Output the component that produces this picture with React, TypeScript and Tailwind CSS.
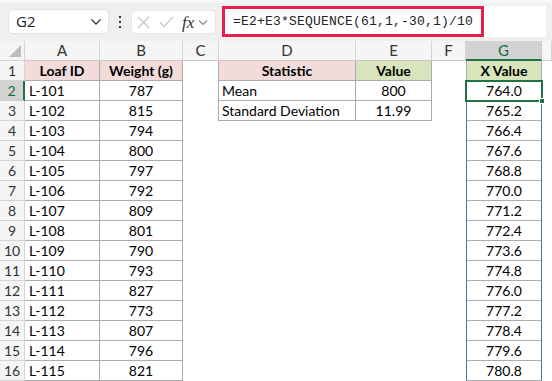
import React from 'react';

const COLS = ['A', 'B', 'C', 'D', 'E', 'F', 'G', 'H'];
const WEIGHTS = [787, 815, 794, 800, 797, 792, 809, 801, 790, 793, 827, 773, 807, 796, 821];

const font = { fontFamily: 'Lato, "Liberation Sans", sans-serif' };

function Corner() {
  return (
    <div className="relative border-r border-b border-[#d4d4d4] bg-[#f5f5f5]">
      <svg className="absolute right-[3px] bottom-[3px]" width="12" height="12" viewBox="0 0 12 12">
        <polygon points="12,0 12,12 0,12" fill="#bdbdbd" />
      </svg>
    </div>
  );
}

function Toolbar() {
  return (
    <div className="h-[41px] bg-[#efefef] border-t-[3px] border-[#f7f7f7] flex items-center gap-[6px] pl-[8px] pr-[6px]">
      <div className="w-[101px] h-[25px] mt-[-1px] bg-white rounded-[5px] border border-[#e2e2e2] flex items-center justify-between pl-[7px] pr-[6px]">
        <span className="text-[15px] text-[#222]" style={{ fontFamily: '"Open Sans", sans-serif' }}>G2</span>
        <svg width="12" height="8" viewBox="0 0 12 8">
          <path d="M1.5 1.5 L6 6 L10.5 1.5" fill="none" stroke="#333" strokeWidth="1.3" />
        </svg>
      </div>
      <div className="w-[10px] flex flex-col items-center gap-[3px]">
        <span className="w-[2px] h-[2px] bg-[#333]" />
        <span className="w-[2px] h-[2px] bg-[#333]" />
        <span className="w-[2px] h-[2px] bg-[#333]" />
      </div>
      <div className="w-[85px] h-[24px] bg-white rounded-[5px] border border-[#e6e6e6] flex items-center pl-[5px] gap-[9px]">
        <svg width="13" height="13" viewBox="0 0 13 13">
          <path d="M1 1 L12 12 M12 1 L1 12" stroke="#c4c4c4" strokeWidth="1.2" />
        </svg>
        <svg width="15" height="12" viewBox="0 0 15 12">
          <path d="M1 6.5 L5 10.5 L14 1" fill="none" stroke="#c4c4c4" strokeWidth="1.2" />
        </svg>
        <span className="italic text-[17px] text-[#333] leading-none -ml-[1px]" style={{ fontFamily: '"Liberation Serif", serif' }}>fx</span>
        <svg className="-ml-[5px]" width="10" height="7" viewBox="0 0 10 7">
          <path d="M1 1.5 L5 5.5 L9 1.5" fill="none" stroke="#888" strokeWidth="1.1" />
        </svg>
      </div>
      <div className="flex-1 h-[31px] bg-white mt-[-1px] flex items-center">
        <div className="w-[262px] h-[31px] border-[3px] border-[#e81d4c] flex items-center pl-[8px]">
          <span className="text-[13px] tracking-[0.2px] text-[#222] whitespace-nowrap" style={{ fontFamily: '"Liberation Mono", monospace' }}>
            =E2+E3*SEQUENCE(61,1,-30,1)/10
          </span>
        </div>
      </div>
    </div>
  );
}

export default function App() {
  const line = 'border-[#acacac]';
  const rows: React.ReactNode[] = [];

  // header row 1
  rows.push(
    <React.Fragment key="r1">
      <div className="border-r border-b border-[#d4d4d4] bg-[#f5f5f5] flex items-center justify-center text-[#333]">1</div>
      <div className={`border-r border-b ${line} bg-[#f2dcdb] font-bold flex items-center justify-center`}>Loaf ID</div>
      <div className={`border-r border-b ${line} bg-[#f2dcdb] font-bold flex items-center justify-center`}>Weight (g)</div>
      <div className={`border-r ${line}`} />
      <div className={`border-r border-b ${line} bg-[#f2dcdb] font-bold flex items-center justify-center`}>Statistic</div>
      <div className={`border-r border-b ${line} bg-[#d8e4bc] font-bold flex items-center justify-center`}>Value</div>
      <div />
      <div className={`border-l border-r ${line} bg-[#d8e4bc] font-bold flex items-center justify-center`}>X Value</div>
      <div />
    </React.Fragment>
  );

  for (let r = 2; r <= 16; r++) {
    const i = r - 2;
    const sel = r === 2;
    const g = (764 + i * 1.2).toFixed(1);
    rows.push(
      <React.Fragment key={`r${r}`}>
        <div
          className={
            sel
              ? 'border-r-2 border-r-[#217346] border-b border-b-[#c8c8c8] bg-[#d2d2d2] flex items-center justify-center text-[#0f703b]'
              : 'border-r border-b border-[#d4d4d4] bg-[#f5f5f5] flex items-center justify-center text-[#333]'
          }
        >
          {r}
        </div>
        <div className={`border-r border-b ${line} flex items-center pl-[4px]`}>{`L-${100 + r - 1}`}</div>
        <div className={`border-r border-b ${line} flex items-center justify-center`}>{WEIGHTS[i]}</div>
        <div className={r <= 3 ? `border-r ${line}` : ''} />
        {r <= 3 ? (
          <div className={`border-r border-b ${line} flex items-center pl-[3px]`}>{r === 2 ? 'Mean' : 'Standard Deviation'}</div>
        ) : (
          <div />
        )}
        {r <= 3 ? (
          <div className={`border-r border-b ${line} flex items-center justify-center`}>{r === 2 ? '800' : '11.99'}</div>
        ) : (
          <div />
        )}
        <div />
        {sel ? (
          <div className="relative flex items-center justify-center">
            <div className="absolute -left-[1px] -top-[1px] -right-[1px] -bottom-[1px] border-2 border-[#217346]" />
            <div className="absolute -right-[3px] -bottom-[3px] w-[6px] h-[6px] bg-[#217346] border border-white" />
            {g}
          </div>
        ) : (
          <div className="border-l border-r border-[#4472c4] border-b border-b-[#acacac] flex items-center justify-center">{g}</div>
        )}
        <div />
      </React.Fragment>
    );
  }

  return (
    <div className="w-[552px] h-[381px] overflow-hidden bg-white text-black" style={font}>
      <Toolbar />
      <div className="grid grid-cols-[25px_75px_83px_36px_137px_76px_34px_76px_1fr] auto-rows-[20px] text-[14px] leading-none">
        <Corner />
        {COLS.map((c) => (
          <div
            key={c}
            className={
              c === 'G'
                ? 'bg-[#d2d2d2] text-[#0f703b] text-[15px] border-r border-[#c8c8c8] border-b-2 border-b-[#217346] flex items-center justify-center'
                : 'bg-[#f5f5f5] text-[#333] text-[15px] border-r border-[#d4d4d4] border-b border-b-[#c8c8c8] flex items-center justify-center'
            }
          >
            {c === 'H' ? '' : c}
          </div>
        ))}
        {rows}
      </div>
    </div>
  );
}
